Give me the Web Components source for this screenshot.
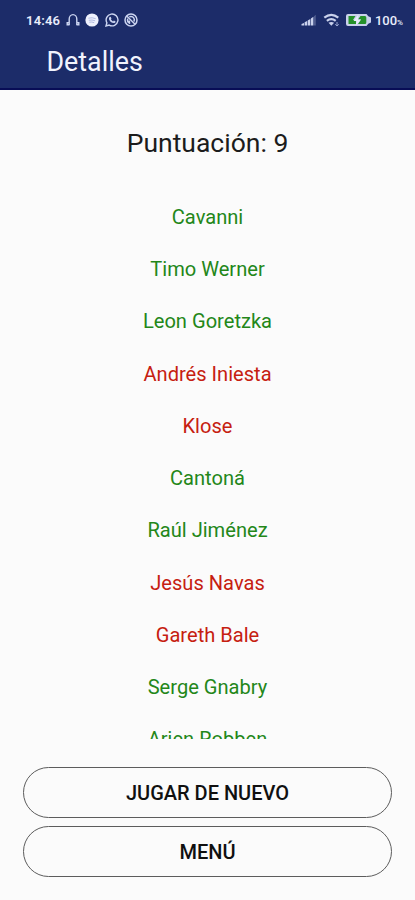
<!DOCTYPE html>
<html lang="es">
<head>
<meta charset="utf-8">
<title>Detalles</title>
<style>
  html, body { margin: 0; height: 100%; }
  body { font-family: Roboto, "Noto Sans", sans-serif; background: #fbfbfb; overflow: hidden; }
</style>
</head>
<body>
<details-screen></details-screen>
<script>
class StatusBar extends HTMLElement {
  constructor() {
    super();
    this.attachShadow({ mode: 'open' }).innerHTML = `
<style>
  :host { display: flex; align-items: center; justify-content: space-between; box-sizing: border-box; height: 40px; padding: 0 12px 0 26px; color: #e9edfb; font-size: 13px; font-weight: 600; }
  div { display: flex; align-items: center; }
  svg { display: block; flex: none; }
  .time { width: 40px; letter-spacing: .2px; }
  .left svg { width: 14px; height: 14px; margin-right: 5.3px; }
  .pct { font-size: 13px; font-weight: 500; }
  .pct small { font-size: 8px; }
</style>
<div class="left">
  <span class="time">14:46</span>
  <svg viewBox="0 0 14 14" fill="none" stroke="#ccd5f1" stroke-width="1.4"><path d="M3.2 12.3V6a3.8 4.4 0 0 1 7.6 0v6.3M3.2 9.800H1.200v2h2M10.800 9.800h2v2h-2"/></svg>
  <svg viewBox="0 0 14 14"><circle cx="7" cy="7" r="6.600" fill="#eef1fd"/><path d="M3.400 5.200q3.800-1.100 7.300.5M3.800 7.300q3.300-.8 6.300.5M4.200 9.200q2.800-.6 5 .5" fill="none" stroke="#a3afd9" stroke-width=".8"/></svg>
  <svg viewBox="0 0 14 14"><path d="M1 13l.9-3.200A5.900 5.900 0 1 1 4.200 12.100z" fill="none" stroke="#ccd5f1" stroke-width="1.400"/><path d="M4.600 4l1-.3.9 1.800-.6.800q.8 1.500 2.200 2.100l.8-.8 1.700.8q0 1.500-1.600 1.700Q5.200 9.600 4 6.200 3.800 4.800 4.600 4z" fill="#ccd5f1"/></svg>
  <svg viewBox="0 0 14 14" fill="none" stroke="#ccd5f1"><circle cx="7" cy="7" r="6" stroke-width="1.500"/><path d="M3 3.200l8 8" stroke-width="1.500"/><path d="M5.300 3.800q4.200-1.100 5 2.600 0 1.300-.6 2M3.700 5.700q-.8 3.900 2.500 4.700M5.400 7.500v2.800" stroke-width="1.500"/></svg>
</div>
<div>
  <svg width="16" height="14" viewBox="0 0 16 14"><g fill="#c9d1ec"><path d="M.5 12.500V11L3 10v2.500zM3.600 12.500V9.200l2.500-1.200v4.500zM6.700 12.500V7.500l2.600-1.500v6.500zM9.900 12.500V5.600l2.500-1.800v8.700z"/><path d="M13 12.500V3.200L14.800 1.700v10.800z" opacity=".3"/></g></svg>
  <svg style="margin-left:6px" width="18" height="14" viewBox="0 0 18 14"><g fill="none" stroke="#c9d1ec" stroke-width="2.200"><path d="M1.300 4.700q7-5.700 14 0M3.900 7.800q4.400-3.500 8.800 0"/></g><path d="M5.500 9.800q2.800-1.700 5.600 0L8.300 12.800z" fill="#c9d1ec"/><path d="M14 9v4M12.200 11.300L14 13l1.800-1.700" fill="none" stroke="#9aa7d2"/></svg>
  <svg style="margin:0 3px 0 4px" width="27" height="14" viewBox="0 0 27 14"><path d="M3 1h18.500l1.800 2.200L26 4.500v5l-2.700 1.300L21.500 13H3Q1 13 1 11V3q0-2 2-2z" fill="#c9d1ec"/><path d="M3.500 3h7L8 7h3v4H3.500zM15.500 3H20q1.300 0 1.300 1.500v5Q21.300 11 20 11h-7l3-4.500h-3z" fill="#25912a"/><path d="M13.500 1.500L8.500 8h3.200l-1 4.800L16 6.500h-3.200z" fill="#e8eefa"/></svg>
  <span class="pct">100<small>%</small></span>
</div>`;
  }
}
customElements.define('status-bar', StatusBar);

class AppHeader extends HTMLElement {
  constructor() {
    super();
    this.attachShadow({ mode: 'open' }).innerHTML = `
<style>
  :host { display: block; box-sizing: border-box; height: 90px; background: #1c2c69; border-bottom: 2px solid #080d56; }
  h1 { margin: 0; padding: 6px 0 0 46.500px; font-size: 26.800px; line-height: 32px; font-weight: 400; color: #f1f3fd; }
</style>
<status-bar></status-bar>
<h1><slot></slot></h1>`;
  }
}
customElements.define('app-header', AppHeader);

class PlayerName extends HTMLElement {
  constructor() {
    super();
    this.attachShadow({ mode: 'open' }).innerHTML = `
<style>
  :host { display: block; height: 52.250px; line-height: 52.250px; text-align: center; font-size: 20.100px; color: #238719; }
  :host([miss]) { color: #c62010; }
</style>
<slot></slot>`;
  }
}
customElements.define('player-name', PlayerName);

class PillButton extends HTMLElement {
  constructor() {
    super();
    this.attachShadow({ mode: 'open' }).innerHTML = `
<style>
  :host { display: block; }
  button { display: block; box-sizing: border-box; width: 100%; height: 51px; padding: 2px 0 0; border: 1px solid #5c5c5c; border-radius: 26px; background: transparent; color: #101010; font: 500 20px/47px Roboto, "Noto Sans", sans-serif; }
</style>
<button><slot></slot></button>`;
  }
}
customElements.define('pill-button', PillButton);

class DetailsScreen extends HTMLElement {
  constructor() {
    super();
    this.attachShadow({ mode: 'open' }).innerHTML = `
<style>
  :host { display: flex; flex-direction: column; height: 900px; }
  h2 { margin: 0; padding-top: 37px; height: 63px; line-height: 32px; text-align: center; font-size: 26.500px; font-weight: 400; color: #1c1c1c; }
  .list { box-sizing: border-box; height: 549px; padding-top: .8px; overflow: hidden; }
  .actions { display: grid; gap: 8px; padding: 28px 23px 0; }
</style>
<app-header>Detalles</app-header>
<h2>Puntuación: 9</h2>
<div class="list">
  <player-name>Cavanni</player-name>
  <player-name>Timo Werner</player-name>
  <player-name>Leon Goretzka</player-name>
  <player-name miss>Andrés Iniesta</player-name>
  <player-name miss>Klose</player-name>
  <player-name>Cantoná</player-name>
  <player-name>Raúl Jiménez</player-name>
  <player-name miss>Jesús Navas</player-name>
  <player-name miss>Gareth Bale</player-name>
  <player-name>Serge Gnabry</player-name>
  <player-name>Arjen Robben</player-name>
</div>
<div class="actions">
  <pill-button>JUGAR DE NUEVO</pill-button>
  <pill-button>MENÚ</pill-button>
</div>`;
  }
}
customElements.define('details-screen', DetailsScreen);
</script>
</body>
</html>
